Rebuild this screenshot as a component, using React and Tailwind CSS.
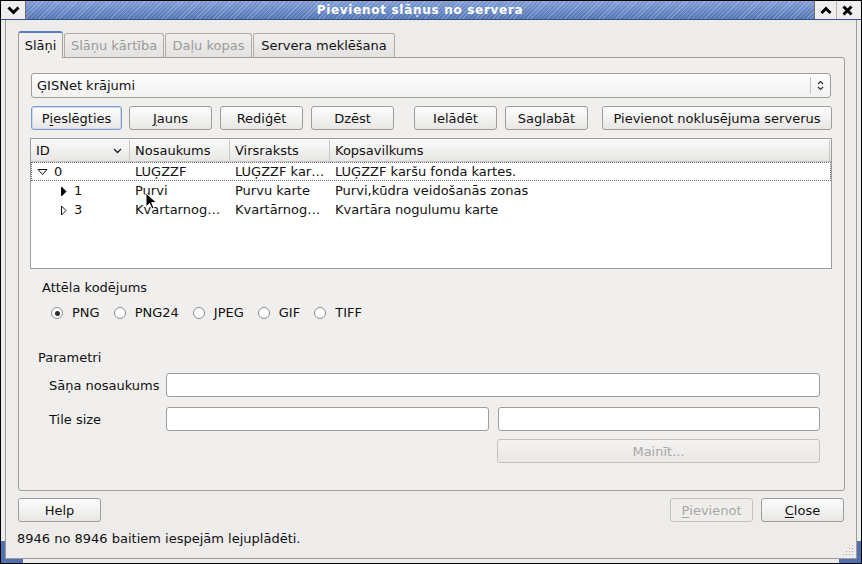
import React from 'react';

const Btn = ({ children, className = '', disabled = false, focus = false }) => (
  <div
    className={`h-[24px] pt-px flex items-center justify-center rounded-[3px] border shrink-0 ${
      disabled
        ? 'border-[#c3c2c0] text-[#a8a7a5] bg-[#eeedeb]'
        : focus
        ? 'border-[#7d9bcf] shadow-[inset_0_0_0_1px_#c9d7ef] bg-linear-to-b from-[#fdfdfd] to-[#e8e7e5]'
        : 'border-[#9e9d9b] bg-linear-to-b from-[#fdfdfd] to-[#e8e7e5]'
    } ${className}`}
  >
    {children}
  </div>
);

const Radio = ({ label, checked }) => (
  <div className="flex items-center">
    <div className="w-[12px] h-[12px] rounded-full border border-[#8e8d8b] bg-white flex items-center justify-center">
      {checked && <div className="w-[5px] h-[5px] rounded-full bg-[#2e2e2e]" />}
    </div>
    <span className="ml-[9px]">{label}</span>
  </div>
);

const TriDownHollow = () => (
  <svg width="11" height="8" viewBox="0 0 11 8">
    <path d="M1 1.5 L10 1.5 L5.5 6.5 Z" fill="white" stroke="#111" strokeWidth="1" />
  </svg>
);

const TriRight = ({ filled }) => (
  <svg width="7" height="11" viewBox="0 0 7 11">
    <path d="M1.5 1 L6 5.5 L1.5 10 Z" fill={filled ? '#000' : 'white'} stroke="#111" strokeWidth="1" />
  </svg>
);

const rows = [
  { id: '0', name: 'LUĢZZF', title: 'LUĢZZF kar…', summary: 'LUĢZZF karšu fonda kartes.', level: 0 },
  { id: '1', name: 'Purvi', title: 'Purvu karte', summary: 'Purvi,kūdra veidošanās zonas', level: 1, filled: true },
  { id: '3', name: 'Kvartarnog…', title: 'Kvartārnog…', summary: 'Kvartāra nogulumu karte', level: 1 },
];

export default function App() {
  return (
    <div className="relative w-[862px] h-[564px] bg-[#edeceb] border border-black flex flex-col overflow-hidden font-['DejaVu_Sans',sans-serif] text-[13px] text-[#111] leading-[16px]">
      {/* title bar */}
      <div className="h-[19px] flex shrink-0 border-b border-[#34508a]">
        <div className="w-[25px] bg-[#efeeec] flex items-center justify-center border-r border-[#6b6b6b]">
          <svg width="13" height="9" viewBox="0 0 13 9">
            <path d="M1.5 1.5 L6.5 6.5 L11.5 1.5" fill="none" stroke="#000" strokeWidth="3" />
          </svg>
        </div>
        <div className="flex-1 flex items-center justify-center bg-[image:repeating-linear-gradient(135deg,rgba(255,255,255,0.22)_0px,rgba(255,255,255,0.22)_1px,transparent_1px,transparent_3px),linear-gradient(#7e9dd6,#5374b4)] text-white font-bold text-[12px] tracking-[0.7px]">
          Pievienot slāņus no servera
        </div>
        <div className="w-[22px] bg-[#efeeec] flex items-center justify-center border-l border-[#6b6b6b]">
          <svg width="12" height="9" viewBox="0 0 12 9">
            <path d="M1.5 7 L6 2.5 L10.5 7" fill="none" stroke="#000" strokeWidth="3" />
          </svg>
        </div>
        <div className="w-[22px] bg-[#efeeec] flex items-center justify-center border-l border-[#b5b4b2]">
          <svg width="11" height="11" viewBox="0 0 11 11">
            <path d="M1.5 1.5 L9.5 9.5 M9.5 1.5 L1.5 9.5" fill="none" stroke="#000" strokeWidth="3" />
          </svg>
        </div>
        <div className="w-[3px] bg-[#efeeec]" />
      </div>

      {/* body */}
      <div className="flex-1 mx-[4px] mb-[4px] border-x border-b border-[#9d9c9a] flex flex-col pl-[12px] pr-[11px] pt-[11px]">
        {/* tabs */}
        <div className="h-[26px] flex items-end shrink-0 relative z-10">
          <div className="h-[27px] w-[45px] -mb-px pt-px flex items-center justify-center bg-[#f0efee] border-x border-[#a09f9d] border-t-[2px] border-t-[#5b7dc0] rounded-t-[3px]">
            Slāņi
          </div>
          <div className="h-[24px] w-[100px] pt-px flex items-center justify-center text-[#9b9a98] bg-linear-to-b from-[#f1f0ee] to-[#e3e2e0] border border-b-0 border-[#aeadab] rounded-t-[3px] ml-[1px]">
            Slāņu kārtība
          </div>
          <div className="h-[24px] w-[87px] pt-px flex items-center justify-center text-[#9b9a98] bg-linear-to-b from-[#f1f0ee] to-[#e3e2e0] border border-b-0 border-[#aeadab] rounded-t-[3px] ml-[1px]">
            Daļu kopas
          </div>
          <div className="h-[24px] w-[142px] pt-px flex items-center justify-center bg-linear-to-b from-[#f1f0ee] to-[#e3e2e0] border border-b-0 border-[#aeadab] rounded-t-[3px] ml-[1px]">
            Servera meklēšana
          </div>
        </div>

        {/* pane */}
        <div className="h-[434px] shrink-0 border border-[#a09f9d] rounded-b-[3px] rounded-tr-[3px] bg-[#f0efee] pl-[12px] pr-[13px] pt-[15px] flex flex-col">
          {/* combobox */}
          <div className="h-[25px] flex items-center rounded-[3px] border border-[#9e9d9b] bg-linear-to-b from-[#fdfdfd] to-[#f2f1f0]">
            <span className="flex-1 pl-[5px] pt-px">ĢISNet krājumi</span>
            <div className="w-px h-[17px] bg-[#c6c5c3]" />
            <div className="w-[19px] flex items-center justify-center">
              <svg width="7" height="11" viewBox="0 0 7 11">
                <path d="M1 4 L3.5 1.5 L6 4 M1 7 L3.5 9.5 L6 7" fill="none" stroke="#333" strokeWidth="1.2" />
              </svg>
            </div>
          </div>

          {/* buttons */}
          <div className="flex mt-[8px]">
            <Btn className="w-[91px]" focus>
              P<span className="underline underline-offset-2">i</span>eslēgties
            </Btn>
            <Btn className="w-[83px] ml-[7px]">
              <span className="underline underline-offset-2">J</span>auns
            </Btn>
            <Btn className="w-[83px] ml-[8px]">Rediģēt</Btn>
            <Btn className="w-[83px] ml-[8px]">Dzēst</Btn>
            <Btn className="w-[83px] ml-[20px]">Ielādēt</Btn>
            <Btn className="w-[83px] ml-[8px]">Saglabāt</Btn>
            <Btn className="w-[230px] ml-[14px]">Pievienot noklusējuma serverus</Btn>
          </div>

          {/* tree */}
          <div className="mt-[8px] -ml-px -mr-px h-[131px] border border-[#9e9d9b] bg-white flex flex-col">
            <div className="h-[23px] pt-px flex bg-linear-to-b from-[#fbfbfb] to-[#e7e6e4] border-b border-[#c4c3c1]">
              <div className="w-[99px] flex items-center pl-[5px] border-r border-[#c9c8c6]">
                <span className="flex-1">ID</span>
                <svg width="9" height="6" viewBox="0 0 9 6" className="mr-[7px]">
                  <path d="M1 1 L4.5 4.5 L8 1" fill="none" stroke="#222" strokeWidth="1.4" />
                </svg>
              </div>
              <div className="w-[100px] flex items-center pl-[5px] border-r border-[#c9c8c6]">Nosaukums</div>
              <div className="w-[100px] flex items-center pl-[5px] border-r border-[#c9c8c6]">Virsraksts</div>
              <div className="flex-1 flex items-center pl-[5px] border-r border-[#c9c8c6] mr-[1px]">Kopsavilkums</div>
            </div>
            {rows.map((r, i) => (
              <div
                key={r.id}
                className={`h-[19px] pt-px flex items-center ${i === 0 ? 'border border-dotted border-[#6e6e6e]' : 'border border-transparent'}`}
              >
                <div className="w-[98px] flex items-center">
                  {r.level === 0 ? (
                    <div className="flex items-center pl-[5px]">
                      <TriDownHollow />
                      <span className="ml-[6px]">{r.id}</span>
                    </div>
                  ) : (
                    <div className="flex items-center pl-[28px]">
                      <TriRight filled={r.filled} />
                      <span className="ml-[7px]">{r.id}</span>
                    </div>
                  )}
                </div>
                <div className="w-[100px] pl-[5px] whitespace-nowrap overflow-hidden">{r.name}</div>
                <div className="w-[100px] pl-[5px] whitespace-nowrap overflow-hidden">{r.title}</div>
                <div className="flex-1 pl-[5px] whitespace-nowrap overflow-hidden">{r.summary}</div>
              </div>
            ))}
          </div>

          {/* image encoding */}
          <div className="mt-[10px] ml-[11px] h-[16px] pt-px">Attēla kodējums</div>
          <div className="mt-[10px] ml-[20px] h-[16px] flex items-center gap-[14px]">
            <Radio label="PNG" checked />
            <Radio label="PNG24" />
            <Radio label="JPEG" />
            <Radio label="GIF" />
            <Radio label="TIFF" />
          </div>

          {/* params */}
          <div className="mt-[28px] ml-[7px] h-[16px] pt-px">Parametri</div>
          <div className="mt-[8px] ml-[18px] mr-[11px] flex items-center h-[24px]">
            <span className="w-[117px] pt-px">Sāņa nosaukums</span>
            <div className="flex-1 h-[24px] rounded-[3px] border border-[#9e9d9b] bg-white" />
          </div>
          <div className="mt-[10px] ml-[18px] mr-[11px] flex items-center h-[24px]">
            <span className="w-[117px] pt-px">Tile size</span>
            <div className="flex-1 h-[24px] rounded-[3px] border border-[#9e9d9b] bg-white" />
            <div className="flex-1 ml-[9px] h-[24px] rounded-[3px] border border-[#9e9d9b] bg-white" />
          </div>
          <div className="mt-[8px] mr-[11px] flex justify-end">
            <Btn className="w-[323px] bg-linear-to-b from-[#f4f3f2] to-[#e9e8e6]" disabled>
              Mainīt...
            </Btn>
          </div>
        </div>

        {/* bottom buttons */}
        <div className="mt-[7px] flex shrink-0">
          <Btn className="w-[83px]">Help</Btn>
          <div className="flex-1" />
          <Btn className="w-[83px]" disabled>
            <span className="underline underline-offset-2">P</span>ievienot
          </Btn>
          <Btn className="w-[83px] ml-[8px] mr-[1px]">
            <span className="underline underline-offset-2">C</span>lose
          </Btn>
        </div>
        <div className="mt-[8px] h-[16px] pt-px -ml-[1px]">8946 no 8946 baitiem iespejām lejuplādēti.</div>
      </div>

      {/* size grip */}
      <svg className="absolute right-[7px] bottom-[7px]" width="12" height="12" viewBox="0 0 12 12">
        {[
          [10, 2], [10, 5], [10, 8], [10, 11],
          [7, 5], [7, 8], [7, 11],
          [4, 8], [4, 11],
          [1, 11],
        ].map(([x, y], k) => (
          <rect key={k} x={x} y={y - 1} width="1" height="1" fill="#a8a7a5" />
        ))}
      </svg>

      {/* frame corners */}
      <div className="absolute left-0 bottom-0 w-[4px] h-[22px] bg-[#4f6fae]" />
      <div className="absolute left-0 bottom-0 w-[22px] h-[4px] bg-[#4f6fae]" />
      <div className="absolute right-0 bottom-0 w-[4px] h-[22px] bg-[#4f6fae]" />
      <div className="absolute right-0 bottom-0 w-[22px] h-[4px] bg-[#4f6fae]" />

      {/* mouse pointer */}
      <svg className="absolute left-[144px] top-[191px]" width="13" height="19" viewBox="0 0 13 19">
        <path d="M1 1 L1 15 L4.5 11.5 L7 17 L9 16 L6.7 10.6 L11.5 10.6 Z" fill="#000" stroke="#fff" strokeWidth="1" />
      </svg>
    </div>
  );
}
